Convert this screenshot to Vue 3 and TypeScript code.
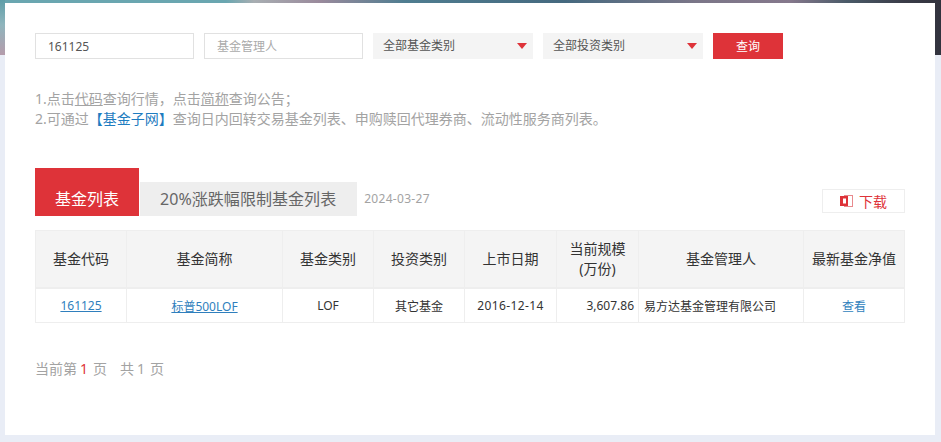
<script setup lang="ts">
const columns = [
  { title: '基金代码', w: 91 },
  { title: '基金简称', w: 156 },
  { title: '基金类别', w: 91 },
  { title: '投资类别', w: 91 },
  { title: '上市日期', w: 92 },
  { title: '当前规模(万份)', w: 82 },
  { title: '基金管理人', w: 165 },
  { title: '最新基金净值', w: 101 }
]
</script>

<template>
  <div class="page">
    <div class="card">
      <form class="filters" @submit.prevent>
        <input class="field" value="161125" />
        <input class="field" placeholder="基金管理人" />
        <div class="select">全部基金类别<i class="caret"></i></div>
        <div class="select">全部投资类别<i class="caret"></i></div>
        <button class="search">查询</button>
      </form>

      <div class="notes">
        <p>1.点击<u>代码</u>查询行情，点击<u>简称</u>查询公告；</p>
        <p>2.可通过<b>【<span>基金子网</span>】</b>查询日内回转交易基金列表、申购赎回代理券商、流动性服务商列表。</p>
      </div>

      <div class="tabs">
        <div class="tab active">基金列表</div>
        <div class="tab">20%涨跌幅限制基金列表</div>
        <span class="date">2024-03-27</span>
        <a class="download">
          <svg width="13" height="12" viewBox="0 0 13 12">
            <rect x="4.5" y="0.5" width="8" height="11" fill="#fff" stroke="#e88a8e" />
            <rect x="0" y="1" width="8" height="10" fill="#de3339" />
            <rect x="3" y="3.5" width="3" height="5" fill="#fff" />
          </svg>
          下载
        </a>
      </div>

      <table class="grid">
        <colgroup>
          <col v-for="c in columns" :key="c.title" :style="{ width: c.w + 'px' }" />
        </colgroup>
        <thead>
          <tr>
            <th>基金代码</th>
            <th>基金简称</th>
            <th>基金类别</th>
            <th>投资类别</th>
            <th>上市日期</th>
            <th>当前规模<br />(万份)</th>
            <th>基金管理人</th>
            <th>最新基金净值</th>
          </tr>
        </thead>
        <tbody>
          <tr>
            <td><a class="under">161125</a></td>
            <td><a class="under">标普500LOF</a></td>
            <td>LOF</td>
            <td>其它基金</td>
            <td class="spaced">2016-12-14</td>
            <td class="right">3,607.86</td>
            <td class="left">易方达基金管理有限公司</td>
            <td><a>查看</a></td>
          </tr>
        </tbody>
      </table>

      <div class="pager">当前第<em>1</em>页<span class="total">共<span>1</span>页</span></div>
    </div>
  </div>
</template>

<style>
html, body { margin: 0; background: #e9edf6; }
</style>

<style scoped>
.page {
  height: 442px;
  padding: 3px 6px 7px 5px;
  box-sizing: border-box;
  overflow: hidden;
  background:
    linear-gradient(180deg, #5f9ea8 0%, #8fb5bd 45%, #b59cab 100%) left top / 5px 55px no-repeat,
    linear-gradient(90deg, #6aa6b0 0%, #6aa6b0 24%, #a8aeb2 27%, #9a8a9c 34%, #4f7d90 43%, #45697f 60%, #7b7688 74%, #85788c 84%, #4a5a68 90%, #3a3c48 96%, #32333e 100%) top / 100% 55px no-repeat,
    #e9edf6;
  font-family: "Noto Sans", "Noto Sans CJK SC", sans-serif;
}
.card {
  height: 100%;
  background: #fff;
  padding: 30px 30px 0;
  box-sizing: border-box;
}
.filters {
  display: flex;
  gap: 10px;
  height: 26px;
}
.field {
  width: 159px;
  height: 26px;
  box-sizing: border-box;
  border: 1px solid #e1e1e1;
  padding: 0 12px;
  font: 12px "Noto Sans", "Noto Sans CJK SC", sans-serif;
  color: #555;
  outline: none;
  background: #fff;
}
.field::placeholder { color: #aaa; }
.select {
  position: relative;
  width: 160px;
  height: 26px;
  line-height: 26px;
  padding-left: 10px;
  box-sizing: border-box;
  background: #f4f4f4;
  font-size: 12px;
  color: #555;
}
.caret {
  position: absolute;
  right: 6px;
  top: 10px;
  border-left: 5px solid transparent;
  border-right: 5px solid transparent;
  border-top: 6px solid #de3339;
}
.search {
  width: 70px;
  height: 26px;
  border: 0;
  padding: 0;
  background: #de3339;
  color: #fff;
  font: 12px "Noto Sans", "Noto Sans CJK SC", sans-serif;
}
.notes {
  margin-top: 30px;
  font-size: 14px;
  line-height: 20px;
  color: #a3a3a3;
}
.notes p { margin: 0; }
.notes u { color: #a3a3a3; }
.notes b { font-weight: 400; color: #1e7cc0; }
.tabs {
  display: flex;
  align-items: flex-end;
  margin-top: 39px;
  height: 48px;
}
.tab {
  height: 34px;
  line-height: 34px;
  padding: 0 21px 0 20px;
  margin-left: 1px;
  background: #eee;
  color: #666;
  font-size: 16px;
  letter-spacing: 0.05px;
}
.tab.active {
  height: 48px;
  line-height: 62px;
  margin-left: 0;
  width: 104px;
  padding: 0;
  text-align: center;
  background: #de3339;
  color: #fff;
}
.date {
  margin-left: 7px;
  line-height: 34px;
  font-size: 12px;
  color: #a3a3a3;
  letter-spacing: 0.3px;
}
.download {
  margin-left: auto;
  align-self: flex-end;
  display: flex;
  align-items: center;
  gap: 6px;
  width: 83px;
  height: 24px;
  margin-bottom: 3px;
  padding-left: 17px;
  box-sizing: border-box;
  border: 1px solid #eee;
  color: #de3339;
  font-size: 14px;
}
.grid {
  margin-top: 14px;
  width: 870px;
  table-layout: fixed;
  border-collapse: collapse;
  font-size: 12px;
}
.grid th, .grid td {
  border: 1px solid #eee;
  padding: 0;
  text-align: center;
}
.grid th {
  height: 56px;
  background: #f4f4f4;
  font-size: 14px;
  font-weight: 400;
  line-height: 20px;
  color: #333;
  border-bottom-width: 2px;
}
.grid td { height: 33px; color: #333; }
.grid a { color: #2f7fbd; }
.grid a.under { text-decoration: underline; }
.grid td.spaced { letter-spacing: 0.4px; }
.grid td.right { text-align: right; padding-right: 4px; }
.grid td.left { text-align: left; padding-left: 5px; }
.pager {
  display: flex;
  align-items: center;
  margin-top: 36px;
  font-size: 14px;
  line-height: 20px;
  color: #a3a3a3;
}
.pager em { font-style: normal; color: #de3339; margin: 0 5px 0 3px; }
.pager .total { margin-left: 13px; }
.pager .total span { margin: 0 5px 0 3px; }
</style>
